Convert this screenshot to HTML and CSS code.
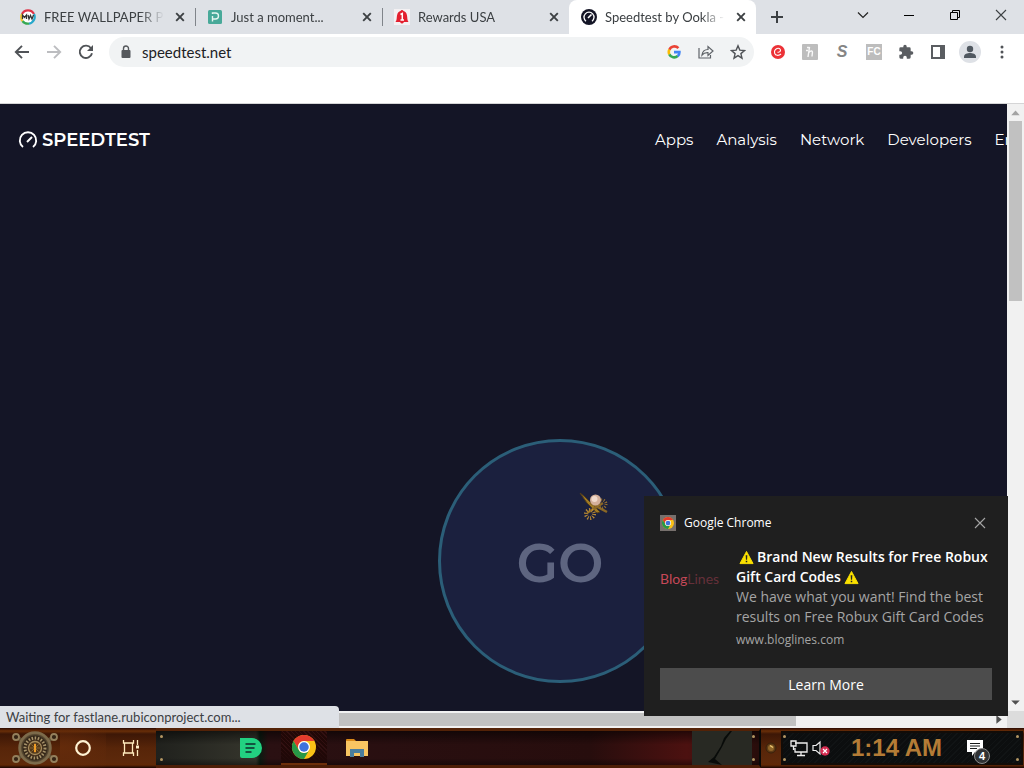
FILE: index.html
```html
<!DOCTYPE html>
<html lang="en">
<head>
<meta charset="utf-8">
<title>Speedtest by Ookla</title>
<link rel="stylesheet" href="styles.css">
</head>
<body>
<svg class="defs" aria-hidden="true">
  <symbol id="x" viewBox="0 0 16 16"><path d="M4.200 4.200l7.600 7.600M11.800 4.200l-7.600 7.600" fill="none" stroke="currentColor" stroke-width="1.900"/></symbol>
  <symbol id="thin-x" viewBox="0 0 16 16"><path d="M3 3l10 10M13 3L3 13" fill="none" stroke="currentColor" stroke-width="1.100"/></symbol>
  <symbol id="chrome" viewBox="0 0 48 48">
    <circle cx="24" cy="24" r="24" fill="#fbc116"/>
    <path d="M3.200 12A24 24 0 0 1 44.800 12L24 12A12 12 0 0 0 13.600 30Z" fill="#e33b2e"/>
    <path d="M3.200 12A24 24 0 0 0 24 48L34.400 30A12 12 0 0 1 13.600 30Z" fill="#279847"/>
    <circle cx="24" cy="24" r="12" fill="#fff"/><circle cx="24" cy="24" r="9.500" fill="#3f72dc"/>
  </symbol>
  <symbol id="warn" viewBox="0 0 16 16"><path d="M8 1.500L15 14.500H1Z" fill="#fce100" stroke="#fce100" stroke-linejoin="round"/><path d="M7.100 5.500h1.800l-.3 5H7.400zM7.200 11.500h1.600v1.600H7.200z" fill="#222"/></symbol>
</svg>

<header class="tabstrip">
  <div class="tab">
    <svg class="i16" viewBox="0 0 16 16"><circle cx="8" cy="8" r="7" fill="#fff"/><g fill="none" stroke-width="2.200"><path d="M2 5A6.700 6.700 0 0 1 14 5" stroke="#df3347"/><path d="M14 5A6.700 6.700 0 0 1 9 14.600" stroke="#27a8cb"/><path d="M9 14.600A6.700 6.700 0 0 1 2.500 12" stroke="#36a852"/><path d="M2.500 12A6.700 6.700 0 0 1 2 5" stroke="#f0c530"/></g><path d="M2.500 10V6l2 2.500L6.500 6v4M8 6l1 4 1.500-3.500L12 10l1.500-4" fill="none" stroke="#333" stroke-width="1.300"/></svg>
    <span class="tab-title">FREE WALLPAPER PR</span>
    <button class="tab-close" aria-label="Close tab"><svg class="i16"><use href="#x"/></svg></button>
  </div>
  <div class="tab divided">
    <svg class="i16" viewBox="0 0 16 16"><rect x="1" y="1" width="14" height="14" rx="1.500" fill="#48a999"/><path d="M5.500 5V4H8.500a2.500 2.500 0 0 1 0 6H5.500V7M5.500 10v2.500" fill="none" stroke="#e5f6f1" stroke-width="1.400"/></svg>
    <span class="tab-title">Just a moment...</span>
    <button class="tab-close" aria-label="Close tab"><svg class="i16"><use href="#x"/></svg></button>
  </div>
  <div class="tab divided">
    <svg class="i16" viewBox="0 0 16 16"><rect width="16" height="16" fill="#f4f1f3"/><path d="M1.500 13C3 11 2.500 9 3 6.500 3.500 3.500 5 2.500 6.500 2 7 .5 9 .5 9.500 2c1.500.5 3 1.500 3.500 4.500.5 2.500 0 4.500 1.500 6.500H10q-2 3-4 0z" fill="#e3202f"/><path d="M6.500 5.500L8.300 4.500V11M6.500 11h3.500" fill="none" stroke="#fff" stroke-width="1.500"/></svg>
    <span class="tab-title">Rewards USA</span>
    <button class="tab-close" aria-label="Close tab"><svg class="i16"><use href="#x"/></svg></button>
  </div>
  <div class="tab active">
    <svg class="i16" viewBox="0 0 16 16"><circle cx="8" cy="8" r="8" fill="#141526"/><path d="M5 12.200A5 5 0 1 1 11 12.200" fill="none" stroke="#fff" stroke-width="1.300"/><path d="M7 9L10.500 5.500" stroke="#fff" stroke-width="1.600"/></svg>
    <span class="tab-title">Speedtest by Ookla -</span>
    <button class="tab-close" aria-label="Close tab"><svg class="i16"><use href="#x"/></svg></button>
  </div>
  <button class="new-tab" aria-label="New tab"><svg class="i16" viewBox="0 0 16 16"><path d="M8 2v12M2 8h12" stroke="#3c4043" stroke-width="2"/></svg></button>
  <div class="window-controls">
    <button aria-label="Search tabs"><svg class="i16" viewBox="0 0 16 16"><path d="M3 5.500l5 5 5-5" fill="none" stroke="#222" stroke-width="1.200"/></svg></button>
    <button aria-label="Minimize"><svg class="i16" viewBox="0 0 16 16"><path d="M3 8.500h10" stroke="#000"/></svg></button>
    <button aria-label="Restore"><svg class="i16" viewBox="0 0 16 16"><path d="M3.500 5.500h7v7h-7zM5.500 5.500v-2h7v7h-2" fill="none" stroke="#000"/></svg></button>
    <button aria-label="Close"><svg class="i16"><use href="#thin-x"/></svg></button>
  </div>
</header>

<div class="toolbar">
  <button class="tool" aria-label="Back"><svg class="i16" viewBox="0 0 16 16"><path d="M15 8H2M8 1.800L1.800 8 8 14.200" fill="none" stroke="#505357" stroke-width="1.900"/></svg></button>
  <button class="tool" aria-label="Forward"><svg class="i16" viewBox="0 0 16 16"><path d="M1 8h13M8 1.800L14.200 8 8 14.200" fill="none" stroke="#bcbdc0" stroke-width="1.900"/></svg></button>
  <button class="tool" aria-label="Reload"><svg class="i16" viewBox="0 0 16 16"><path d="M13 4.200A6.200 6.200 0 1 0 14 9.300" fill="none" stroke="#505357" stroke-width="1.900"/><path d="M15 1v6H9z" fill="#505357"/></svg></button>
  <div class="omnibox">
    <svg class="i16" viewBox="0 0 16 16"><rect x="3.500" y="6" width="9" height="8" rx="1" fill="#55585c"/><path d="M5.500 7V4.500a2.500 2.500 0 0 1 5 0V7" fill="none" stroke="#55585c" stroke-width="1.400"/></svg>
    <input class="url" type="text" value="speedtest.net" aria-label="Address">
    <button class="tool" aria-label="Google"><svg class="i14" viewBox="0 0 24 24"><g fill="none" stroke-width="4.500"><path d="M19.500 5.500A9.300 9.300 0 0 0 4 8" stroke="#ea4335"/><path d="M4 8A9.300 9.300 0 0 0 4 16" stroke="#fbbc05"/><path d="M4 16A9.300 9.300 0 0 0 18.300 19" stroke="#34a853"/><path d="M18.300 19.200A9 9 0 0 0 21.300 12.300H12" stroke="#4285f4"/></g></svg></button>
    <button class="tool" aria-label="Share"><svg class="i16" viewBox="0 0 16 16"><path d="M1 4v10h11.500v-3M4 11C4.500 7 6.500 5.500 10 5.500V2.500L15 7l-5 4.500V8.700C7 8.500 5.500 9.200 4 11Z" fill="none" stroke="#5f6368" stroke-width="1.200"/></svg></button>
    <button class="tool" aria-label="Bookmark"><svg class="i16" viewBox="0 0 16 16"><path d="M8 1.800l1.800 4.300 4.700.4-3.600 3.100 1.100 4.600L8 11.700l-4 2.500 1.100-4.600L1.500 6.500l4.700-.4z" fill="none" stroke="#505357" stroke-width="1.400"/></svg></button>
  </div>
  <div class="extensions">
    <button class="tool" aria-label="Coupons"><svg class="i16" viewBox="0 0 16 16"><circle cx="8" cy="8" r="7" fill="#ec3237"/><path d="M7.500 8.200c1.500.3 3-.6 3-1.900C10.500 4.300 8.500 3.800 7 4.500 5 5.400 4.200 7.500 4.700 9.300c.7 2.400 4 2.700 6.300.7" fill="none" stroke="#fff" stroke-width="1.100"/></svg></button>
    <button class="tool" aria-label="Honey"><svg class="i16" viewBox="0 0 16 16"><rect width="16" height="16" rx="1" fill="#bdbdbd"/><path d="M6 13L7.500 3M6.800 8.500c2-2.300 4-1.800 3.600.3L10 12.500M4 6.500h2M5 3.500h2.500" fill="none" stroke="#f8f8f8" stroke-width="1.400"/></svg></button>
    <button class="tool ext-s" aria-label="S extension">S</button>
    <button class="tool" aria-label="FC extension"><span class="ext-fc">FC</span></button>
    <button class="tool" aria-label="Extensions"><svg class="i16" viewBox="0 0 24 24"><path d="M20.500 11H19V7a2 2 0 0 0-2-2h-4V3.500a2.500 2.500 0 0 0-5 0V5H4a2 2 0 0 0-2 2v3.800h1.500a2.700 2.700 0 0 1 0 5.400H2V20a2 2 0 0 0 2 2h3.800v-1.500a2.700 2.700 0 0 1 5.400 0V22H17a2 2 0 0 0 2-2v-4h1.500a2.500 2.500 0 0 0 0-5z" fill="#5a5d61"/></svg></button>
    <button class="tool" aria-label="Side panel"><svg class="i16" viewBox="0 0 16 16"><rect x="2" y="2" width="12" height="12" fill="none" stroke="#5a5d61" stroke-width="2"/><path d="M10 2h4v12h-4z" fill="#5a5d61"/></svg></button>
    <button class="tool" aria-label="Profile"><span class="avatar"><svg class="i16" viewBox="0 0 16 16"><circle cx="8" cy="5" r="3.200" fill="#505860"/><path d="M2 14v-1.500C2 10 5.500 9 8 9s6 1 6 3.500V14z" fill="#505860"/></svg></span></button>
    <button class="tool" aria-label="Menu"><svg class="i16" viewBox="0 0 16 16" fill="#505357"><circle cx="8" cy="3" r="1.500"/><circle cx="8" cy="8" r="1.500"/><circle cx="8" cy="13" r="1.500"/></svg></button>
  </div>
</div>
<div class="bookmarks"></div>

<div class="viewport">
  <main class="page">
    <div class="page-content">
      <div class="site-header">
        <a class="logo" href="#"><svg class="i20" viewBox="0 0 20 20"><path d="M5 17A8.200 8.200 0 1 1 15 17" fill="none" stroke="#fff" stroke-width="1.900"/><path d="M9 12l5-5" stroke="#fff" stroke-width="2"/></svg><span>SPEEDTEST</span></a>
        <nav class="site-nav"><a href="#">Apps</a><a href="#">Analysis</a><a href="#">Network</a><a href="#">Developers</a><a href="#">Enterprise</a></nav>
      </div>
      <div class="stage"><button class="go">GO</button></div>
    </div>
    <svg class="cursor" viewBox="0 0 32 32"><path d="M3 2l5 4 15 15-3 1L10 12z" fill="#a17b25" stroke="#543e18"/><path d="M13 12l17 9M10 22l16-10" stroke="#8a6725" stroke-width="2.500"/><circle cx="13" cy="23" r="4" fill="none" stroke="#b98a35" stroke-width="4" stroke-dasharray="1 1.500"/><circle cx="25" cy="13" r="4" fill="none" stroke="#94702f" stroke-width="3" stroke-dasharray="1 1.500"/><circle cx="18.500" cy="9" r="5.500" fill="#d5b09a"/><circle cx="17.500" cy="8" r="3" fill="#f1dacb"/></svg>
  </main>
  <div class="vscroll"><svg class="arrow" viewBox="0 0 16 16"><path d="M4 10.500L8 6l4 4.500z" fill="#a3a3a3"/></svg><div class="vthumb"></div><svg class="arrow" viewBox="0 0 16 16"><path d="M4 6l4 4 4-4z" fill="#505050"/></svg></div>
  <div class="hscroll"><div class="hthumb"></div><svg class="arrow" viewBox="0 0 16 16"><path d="M6 4l5 4-5 4z" fill="#505050"/></svg></div>
  <div class="corner"></div>
  <div class="status">Waiting for fastlane.rubiconproject.com...</div>
</div>

<aside class="toast">
  <div class="toast-head"><span class="toast-icon"><svg class="i12"><use href="#chrome"/></svg></span><span>Google Chrome</span><button class="toast-close" aria-label="Dismiss"><svg class="i16"><use href="#thin-x"/></svg></button></div>
  <div class="toast-body">
    <div class="brand"><b>Blog</b><span>Lines</span></div>
    <div class="toast-text">
      <h2><svg class="warn first"><use href="#warn"/></svg>Brand New Results for Free Robux<br>Gift Card Codes <svg class="warn"><use href="#warn"/></svg></h2>
      <p>We have what you want! Find the best<br>results on Free Robux Gift Card Codes</p>
      <small>www.bloglines.com</small>
    </div>
  </div>
  <button class="learn">Learn More</button>
</aside>

<footer class="taskbar">
  <button class="start" aria-label="Start"><svg viewBox="0 0 54 40"><defs><radialGradient id="brass"><stop offset="0" stop-color="#e69a35"/><stop offset=".4" stop-color="#4b3520"/><stop offset=".75" stop-color="#302417"/><stop offset="1" stop-color="#857350"/></radialGradient></defs><g stroke="#5f4e33" stroke-width="4"><path d="M8 9l38 22M46 9L8 31"/></g><g fill="#342415" stroke="#94805c" stroke-width="1.800"><circle cx="8" cy="9" r="3"/><circle cx="46" cy="9" r="3"/><circle cx="8" cy="31" r="3"/><circle cx="46" cy="31" r="3"/></g><circle cx="27" cy="20" r="15.500" fill="url(#brass)" stroke="#7d6b4b" stroke-width="2.500"/><circle cx="27" cy="20" r="10" fill="none" stroke="#a8946b" stroke-width="3" stroke-dasharray="1.500 1.600"/><circle cx="27" cy="20" r="6.500" fill="#523719" stroke="#a58b5c" stroke-width="1.300"/><path d="M22 20h10M27 15v10M23.500 16.500l7 7M30.500 16.500l-7 7" stroke="#927038" stroke-width=".8"/><path d="M27 16v8" stroke="#ef9c25" stroke-width="2"/></svg></button>
  <button class="cortana" aria-label="Search"><svg class="i18" viewBox="0 0 18 18"><circle cx="9" cy="9" r="6.800" fill="none" stroke="#fff3d3" stroke-width="2.200"/></svg></button>
  <button class="taskview" aria-label="Task view"><svg class="i18" viewBox="0 0 18 18"><path d="M1.500 1v3h10V1M1.500 17v-3h10v3M2.500 4v10M10.500 4v10M15.500 1v5M15.500 11v6" fill="none" stroke="#ffebbd" stroke-width="1.300"/><path d="M14 6.500h3v3h-3z" fill="#fff0c9"/></svg></button>
  <div class="apps">
    <span class="rivets"><i></i><i></i></span>
    <button class="app" aria-label="Notes"><svg class="i22" viewBox="0 0 22 22"><path d="M0 1h12a10 10 0 0 1 0 20H2a2 2 0 0 1-2-2z" fill="#22d181"/><path d="M5.500 7h10M5.500 11h9M5.500 15h6" stroke="#135440" stroke-width="1.800"/></svg></button>
    <button class="app running" aria-label="Chrome"><svg class="i24"><use href="#chrome"/></svg></button>
    <button class="app" aria-label="File Explorer"><svg class="i22" viewBox="0 0 22 22"><path d="M0 3q0-1 1-1h7l2 2h-10z" fill="#d98a19"/><path d="M0 4h22v15H0z" fill="#f8c562"/><path d="M4 20v-8h14v8h-4v-4H8v4z" fill="#4a7d9d"/></svg></button>
    <svg class="crack" viewBox="0 0 60 34"><path d="M0 0h60v34H0z" fill="#282923"/><path d="M38 0L32 7 29 15 22 26 16 31l14 3-7-6 7-12 4-8 6-8z" fill="#080b09"/></svg>
    <span class="rivets end"><i></i><i></i></span>
  </div>
  <div class="knob"><svg class="i12" viewBox="0 0 12 12"><circle cx="6" cy="6" r="5" fill="#5e3b16" stroke="#38200c"/><circle cx="6" cy="6" r="3" fill="#8f6528"/><path d="M5 3.500l3 2" stroke="#efcb75" stroke-width="1.300"/></svg></div>
  <div class="tray">
    <span class="rivets"><i></i><i></i></span>
    <svg class="i18" viewBox="0 0 18 18"><path d="M5 4h12v9H5V9M11 13v3M7 16.500h8M1 2h5v5H1zM3.500 7v4" fill="none" stroke="#eee" stroke-width="1.300"/></svg>
    <svg class="i18" viewBox="0 0 18 18"><path d="M1 6.500h3L8 3v12l-4-3.500H1z" fill="none" stroke="#eee" stroke-width="1.200"/><circle cx="13" cy="12" r="4.700" fill="#d42b50"/><path d="M11 10l4 4M15 10l-4 4" stroke="#fff" stroke-width="1.200"/></svg>
    <time class="clock">1:14 AM</time>
    <button class="action" aria-label="Notifications"><svg class="i18" viewBox="0 0 18 18"><path d="M1 1h16v12H9l-3 4v-4H1z" fill="#fff"/><path d="M4 4.500h10M4 7h10M4 9.500h7" stroke="#171a1a" stroke-width="1.200"/></svg><span class="badge">4</span></button>
    <span class="rivets end"><i></i><i></i></span>
  </div>
</footer>
</body>
</html>
```
FILE: styles.css
```css
* { box-sizing: border-box; }
body {
  margin: 0;
  min-height: 100vh;
  display: flex;
  flex-direction: column;
  position: relative;
  overflow: hidden;
  background: #fff;
  font-family: "Comic Sans MS", Lato, sans-serif;
  color: #3c4043;
}
button { border: 0; padding: 0; background: none; color: inherit; font: inherit; display: flex; align-items: center; justify-content: center; }
a { color: inherit; text-decoration: none; }
svg { display: block; flex: none; }
.defs { position: absolute; width: 0; height: 0; }
.i12 { width: 12px; height: 12px; }
.i14 { width: 14px; height: 14px; }
.i16 { width: 16px; height: 16px; }
.i18 { width: 18px; height: 18px; }
.i20 { width: 20px; height: 20px; }
.i22 { width: 22px; height: 22px; }
.i24 { width: 24px; height: 24px; }

.tabstrip { display: flex; height: 34px; padding-left: 8px; background: #dee1e6; }
.tab { display: flex; align-items: center; gap: 8px; flex: 0 1 187px; min-width: 0; padding: 0 7px 0 12px; font-size: 13px; }
.divided { background: linear-gradient(#80848a, #80848a) no-repeat left center / 1px 18px; }
.tab.active { background: #fff; border-radius: 8px 8px 0 0; }
.tab-title { flex: 1; min-width: 0; overflow: hidden; white-space: nowrap; mask-image: linear-gradient(to right, #000 80%, transparent); }
.tab-close { color: #3c4043; }
.new-tab { width: 28px; margin-left: 7px; }
.window-controls { display: flex; height: 29px; margin-left: auto; }
.window-controls button { width: 46px; }

.toolbar { display: flex; align-items: center; height: 36px; padding: 0 6px; }
.tool { width: 32px; height: 30px; flex: none; }
.omnibox { display: flex; align-items: center; flex: 1; min-width: 0; height: 30px; margin: 0 8px 0 7px; padding-left: 9px; border-radius: 15px; background: #f1f3f4; }
.url { flex: 1; min-width: 0; margin-left: 8px; padding: 0; border: 0; outline: 0; background: none; color: #202124; font: 15px "Comic Sans MS", Lato, sans-serif; }
.extensions { display: flex; }
.ext-s { font: italic bold 16px "Liberation Sans", sans-serif; color: #858585; }
.ext-fc { width: 16px; height: 16px; background: #bdbdbd; color: #fff; font: bold 10px/16px "Liberation Sans", sans-serif; }
.avatar { display: flex; align-items: center; justify-content: center; width: 22px; height: 22px; border-radius: 50%; background: #dee1e6; }
.bookmarks { height: 34px; border-bottom: 1px solid #d5d5d6; }

.viewport { position: relative; flex: 1; display: grid; grid-template: minmax(0, 1fr) 17px / minmax(0, 1fr) 17px; background: #f1f1f1; }
.page { position: relative; overflow: hidden; background: #141526; color: #fff; font-family: Montserrat, Inter, sans-serif; }
.page-content { min-width: 1120px; }
.site-header { display: flex; align-items: center; justify-content: space-between; height: 70px; padding: 0 48px 0 18px; }
.logo { display: flex; align-items: center; gap: 4px; padding-top: 2px; font-size: 18px; font-weight: 600; }
.site-nav { display: flex; gap: 23px; font-size: 15px; }
.stage { display: flex; justify-content: center; padding-top: 265px; }
.go { width: 244px; height: 244px; padding-top: 4px; border: 3px solid #2b5e78; border-radius: 50%; background: #1b203e; color: #5e6580; font-size: 54px; font-weight: 600; }
.cursor { position: absolute; left: 577px; top: 387px; width: 32px; height: 32px; }
.vscroll { display: flex; flex-direction: column; align-items: center; }
.arrow { width: 17px; height: 17px; }
.vthumb { width: 13px; height: 180px; margin-bottom: auto; background: #c1c1c1; }
.hscroll { display: flex; align-items: center; }
.hthumb { width: 79%; height: 13px; margin-right: auto; background: #c1c1c1; }
.corner { background: #dcdcdc; }
.status { position: absolute; left: 0; bottom: 0; width: 339px; height: 22px; padding-left: 6px; background: #dee1e6; border-radius: 0 4px 0 0; font-size: 13px; line-height: 22px; }

.toast { position: absolute; right: 16px; bottom: 52px; width: 364px; padding: 16px; background: #1f1f1f; color: #fff; font-family: "Segoe UI", "Open Sans", sans-serif; }
.toast-head { display: flex; align-items: center; gap: 8px; height: 21px; font-size: 12px; }
.toast-icon { display: flex; padding: 2px; background: #77706d; }
.toast-close { margin-left: auto; margin-right: 4px; color: #a5a5a5; }
.toast-body { display: flex; margin-top: 14px; }
.brand { flex: 0 0 76px; margin-top: 22px; font: 14px/20px Lato, sans-serif; color: #c64858; }
.brand b { font-weight: 400; }
.brand span { color: #65303a; }
.toast-text { white-space: nowrap; line-height: 20px; font-size: 14px; }
.toast h2, .toast p { margin: 0; font-size: 14px; line-height: 20px; }
.toast h2 { font-weight: 600; }
.toast p { color: #a5a5a5; }
.toast small { display: block; margin-top: 3px; font-size: 12px; color: #a5a5a5; }
.warn { display: inline-block; width: 15px; height: 15px; vertical-align: -3px; }
.warn.first { margin: 0 3px; }
.learn { width: 100%; height: 32px; margin-top: 18px; background: #4c4c4c; font-size: 14px; }

.taskbar { display: flex; height: 40px; background: linear-gradient(#2a0902 0, #6a2f08 3px, #3d1706 6px, #572509 50%, #5d290b 34px, #602806 37px, #180502); }
.start { width: 60px; padding-left: 10px; }
.start svg { width: 54px; height: 40px; }
.cortana { width: 46px; background: radial-gradient(ellipse at left, #642b0b, transparent); }
.taskview { width: 50px; }
.apps { display: flex; align-items: center; flex: 1; min-width: 0; height: 40px; border-top: 3px solid #532207; border-bottom: 3px solid #4d1e07; border-right: 2px solid #080807; background: linear-gradient(#0008, transparent 40%, transparent 80%, #0006), linear-gradient(to right, #20211d 0, #35352c 100px, #0b1b11 104px, #2a1012 112px, #270d0d 72%, #4c1110 88%, #280d0b); }
.rivets { display: flex; flex-direction: column; justify-content: space-between; height: 26px; margin-left: 4px; }
.rivets i { width: 3px; height: 3px; border-radius: 50%; background: #b39663; }
.rivets.end { margin: 0 4px 0 auto; }
.app { width: 46px; height: 34px; margin-right: 7px; }
.rivets + .app { margin-left: 65px; }
.running { background: linear-gradient(transparent 50%, #1f0808), repeating-linear-gradient(45deg, #210807 0 2px, #321011 2px 3px); border-bottom: 2px solid #6d2e0b; }
.crack { width: 60px; height: 34px; margin-left: auto; }
.crack + .rivets.end { margin-left: 0; }
.knob { display: flex; align-items: center; justify-content: center; width: 20px; }
.tray { display: flex; align-items: center; gap: 4px; width: 242px; margin: 3px 1px 3px 0; border: 2px solid #120c08; background: repeating-linear-gradient(135deg, #0c0e0f 0 3px, #111415 3px 4px); }
.tray .rivets { margin-left: 0; }
.tray .rivets.end { margin: 0 2px 0 auto; }
.clock { margin: 0 auto; color: #b47c36; font: bold 24px "Liberation Sans", sans-serif; white-space: nowrap; }
.action { position: relative; width: 24px; height: 30px; margin-right: 8px; }
.badge { position: absolute; left: 11px; top: 15px; width: 16px; height: 16px; border: 1px solid #8b8b8b; border-radius: 50%; background: #303234; color: #fff; font: bold 11px/14px "Liberation Sans", sans-serif; }
```
